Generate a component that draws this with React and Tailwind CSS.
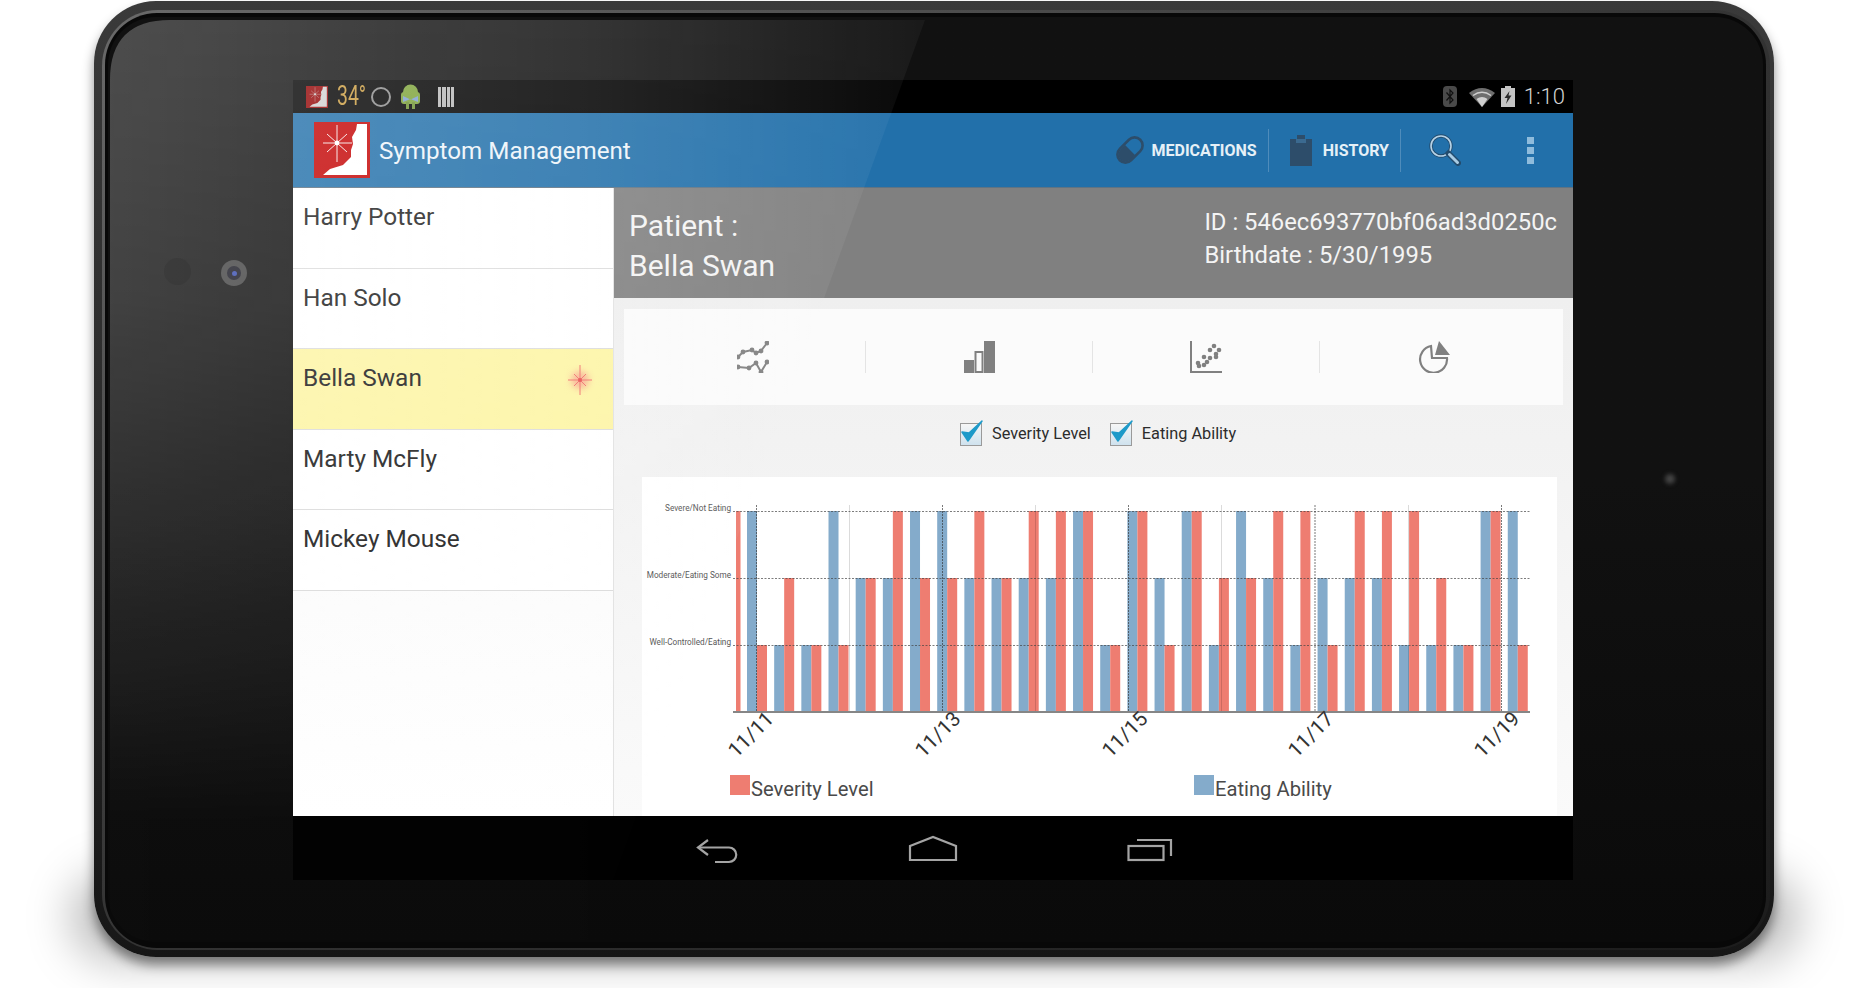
import React from 'react';

const ROBOTO = { fontFamily: 'Roboto, sans-serif' };

const PATIENTS = ['Harry Potter', 'Han Solo', 'Bella Swan', 'Marty McFly', 'Mickey Mouse'];

// [eating, severity] per day group, 1..3 = level
const GROUPS = [
  [3, 1], [1, 2], [1, 1], [3, 1], [2, 2], [2, 3], [3, 2], [3, 2], [2, 3], [2, 2],
  [2, 3], [2, 3], [3, 3], [1, 1], [3, 3], [2, 1], [3, 3], [1, 2], [3, 2], [2, 3],
  [1, 3], [2, 1], [2, 3], [2, 3], [1, 3], [1, 2], [1, 1], [3, 3], [3, 1],
];

const LEVEL_Y = { 1: 645, 2: 578, 3: 511 };
const BASE_Y = 711;

function Logo({ size, bg = '#c40404', fg = '#ffffff' }) {
  return (
    <svg width={size} height={size} viewBox="0 0 56 56" className="shrink-0">
      <rect x="0" y="0" width="56" height="56" fill={bg} />
      <path d="M43 2 L42 8 L38 15 L39 22 L37 28 L37 35 L29 43 L16 47 L9 53 L53 53 L53 2 Z" fill={fg} />
      <g stroke={fg} strokeWidth="0.9">
        <path d="M23 3 V40 M9 21 H38 M13 12 L33 30 M33 12 L13 30" />
      </g>
      <circle cx="23" cy="21" r="2.4" fill={fg} />
    </svg>
  );
}

function StatusBar() {
  return (
    <div className="flex h-[33px] items-center bg-black text-[#b8b8b8]">
      <div className="ml-[13px]"><Logo size={22} bg="#940505" fg="#d2d2d2" /></div>
      <span className="ml-[9px] w-[26px] origin-left scale-x-[.72] text-[27px] leading-none text-[#c99b3f]" style={ROBOTO}>34°</span>
      <div className="ml-[8px] h-[20px] w-[20px] rounded-full border-2 border-[#8c8c8c]" />
      <svg width="21" height="25" viewBox="0 0 21 25" className="ml-[9px]">
        <circle cx="10.500" cy="8" r="7.500" fill="#7da33a" />
        <rect x="1" y="8" width="19" height="12" rx="3" fill="#7da33a" />
        <rect x="6" y="18" width="3" height="7" fill="#6f9433" />
        <rect x="12" y="18" width="3" height="7" fill="#6f9433" />
        <path d="M3 12 L10.500 15.500 L18 12 L18 18 L10.500 15 L3 18 Z" fill="#7d9fd0" />
      </svg>
      <div className="ml-[17px] flex h-[20px] w-[16px] gap-px">
        {[0, 1, 2, 3].map((i) => <div key={i} className="h-full flex-1 bg-[#b9b9b9]" />)}
      </div>
      <div className="flex-1" />
      <svg width="14" height="21" viewBox="0 0 14 21">
        <rect width="14" height="21" rx="4" fill="#4a4a4a" />
        <path d="M3.500 6.500 L10 14 L7 17 V4 L10 7 L3.500 14.500" fill="none" stroke="#111" strokeWidth="1.200" />
      </svg>
      <svg width="26" height="20" viewBox="0 0 26 20" className="ml-[12px]">
        <path d="M0 6 Q13 -4 26 6 L13 20 Z" fill="#6e6e6e" />
        <path d="M7.500 12 Q13 8 18.500 12 L13 20 Z" fill="#d0d0d0" />
        <path d="M4 8.500 Q13 2 22 8.500" fill="none" stroke="#d0d0d0" strokeWidth="1.500" />
      </svg>
      <svg width="14" height="21" viewBox="0 0 14 21" className="ml-[6px]">
        <path d="M4 0 H10 V2 H14 V21 H0 V2 H4 Z" fill="#c4c4c4" />
        <path d="M8.500 5 L3.500 12 H6.500 L5 18 L10.500 9.500 H7.500 Z" fill="#2a2a2a" />
      </svg>
      <span className="ml-[9px] mr-[8px] text-[22px] font-light leading-none text-[#d4d4d4]" style={ROBOTO}>1:10</span>
    </div>
  );
}

function ActionBar() {
  return (
    <div className="flex h-[75px] items-center border-b border-[#5f7383] bg-[#2270aa]">
      <div className="ml-[21px]"><Logo size={56} /></div>
      <span className="ml-[9px] mt-[3px] text-[24.200px] leading-none text-[#eef5fa]" style={ROBOTO}>Symptom Management</span>
      <div className="flex-1" />
      <svg width="30" height="30" viewBox="0 0 30 30">
        <g transform="rotate(-45 15 15)">
          <rect x="0.500" y="7" width="29" height="16" rx="8" fill="none" stroke="#2d4d6a" strokeWidth="2.600" />
          <path d="M8.500 8 A7 7 0 0 0 8.500 22 H15 V8 Z" fill="#2d4d6a" />
        </g>
      </svg>
      <span className="ml-[7px] mt-[2px] text-[16px] font-bold leading-none text-[#e6f0f7]" style={ROBOTO}>MEDICATIONS</span>
      <div className="ml-[11px] h-[43px] w-px bg-[#4f8cbb]" />
      <svg width="22" height="31" viewBox="0 0 22 31" className="ml-[21px]">
        <path d="M0 4 H7 V0 H15 V4 H22 V31 H0 Z" fill="#2d4d6a" />
        <rect x="6" y="4" width="10" height="4" fill="#3b6a90" />
      </svg>
      <span className="ml-[11px] mt-[2px] text-[16px] font-bold leading-none text-[#e6f0f7]" style={ROBOTO}>HISTORY</span>
      <div className="ml-[11px] h-[43px] w-px bg-[#4f8cbb]" />
      <svg width="32" height="32" viewBox="0 0 32 32" className="ml-[28px]">
        <circle cx="12" cy="12" r="10" fill="none" stroke="#234c6e" strokeWidth="3.400" />
        <circle cx="12" cy="12" r="10" fill="none" stroke="#b7d3e7" strokeWidth="1.600" />
        <path d="M19.500 19.500 L29 29" stroke="#234c6e" strokeWidth="6" strokeLinecap="round" />
        <path d="M20.500 20.500 L28.500 28.500" stroke="#a9cce4" strokeWidth="3" strokeLinecap="round" />
      </svg>
      <div className="ml-[66px] mr-[39px] flex flex-col gap-[3px]">
        <div className="h-[7px] w-[7px] bg-[#8fbcdc]" />
        <div className="h-[7px] w-[7px] bg-[#8fbcdc]" />
        <div className="h-[7px] w-[7px] bg-[#8fbcdc]" />
      </div>
    </div>
  );
}

function Star() {
  return (
    <div className="relative h-[30px] w-[24px] shrink-0">
      <div className="absolute left-[3px] top-[6px] h-[18px] w-[18px] rounded-full bg-[#f9a58f] opacity-80 blur-[3px]" />
      <svg width="24" height="30" viewBox="0 0 24 30" className="absolute inset-0">
        <path d="M12 0 V30 M0 15 H24 M6 9 L18 21 M18 9 L6 21" stroke="#f0706a" strokeWidth="1" />
        <circle cx="12" cy="15" r="2" fill="#e8504f" />
      </svg>
    </div>
  );
}

function Sidebar() {
  return (
    <div className="flex w-[321px] shrink-0 flex-col border-r border-[#e2e2e2] bg-gradient-to-b from-[#f6f6f6] to-white">
      {PATIENTS.map((name) => {
        const selected = name === 'Bella Swan';
        return (
          <div
            key={name}
            className={selected
              ? 'flex h-[80.500px] shrink-0 items-start justify-between border-b border-[#dcdcdc] bg-[#fdf5a6] pl-[10px] pr-[21px] pt-[13px]'
              : 'flex h-[80.500px] shrink-0 items-start justify-between border-b border-[#dcdcdc] bg-white pl-[10px] pr-[21px] pt-[13px]'}
          >
            <span className="text-[24.400px] leading-[32px] text-[#222222]" style={ROBOTO}>{name}</span>
            {selected && <div className="mt-[3px]"><Star /></div>}
          </div>
        );
      })}
    </div>
  );
}

function PatientHeader() {
  return (
    <div className="flex h-[110px] shrink-0 justify-between bg-[#808080] text-white" style={ROBOTO}>
      <div className="pl-[15px] pt-[18px] text-[30px] leading-[40px] text-[#f4f4f4]">
        <div>Patient :</div>
        <div>Bella Swan</div>
      </div>
      <div className="pr-[16px] pt-[18px] text-[23.800px] leading-[33px] text-[#f4f4f4]">
        <div>ID : 546ec693770bf06ad3d0250c</div>
        <div>Birthdate : 5/30/1995</div>
      </div>
    </div>
  );
}

function LineIcon() {
  const top = [[1, 16], [6, 11], [15, 9], [19, 12], [24, 10], [30, 2]];
  const bottom = [[1, 26], [12, 27], [19, 22], [24, 31], [30, 21]];
  const points = (list) => list.map((p) => p.join(',')).join(' ');
  return (
    <svg width="32" height="32" viewBox="0 0 32 32" fill="none" stroke="#808080" strokeWidth="2">
      <polyline points={points(top)} />
      <polyline points={points(bottom)} />
      <g fill="#808080" stroke="none">
        {[...top, ...bottom].map(([x, y]) => <circle key={`${x}-${y}`} cx={x} cy={y} r="2.400" />)}
      </g>
    </svg>
  );
}

function BarsIcon() {
  return (
    <svg width="32" height="32" viewBox="0 0 32 32">
      <rect x="1" y="19" width="10" height="13" fill="#808080" />
      <rect x="12.500" y="11" width="7" height="20" fill="none" stroke="#808080" strokeWidth="2" />
      <rect x="21" y="0" width="11" height="32" fill="#808080" />
    </svg>
  );
}

function ScatterIcon() {
  const dots = [[8, 22], [9, 25], [14, 24], [20, 17], [17, 21], [26, 16], [20, 9], [29, 9], [26, 13], [24, 5], [14, 16]];
  return (
    <svg width="32" height="32" viewBox="0 0 32 32">
      <path d="M1 0 V31 H32" fill="none" stroke="#808080" strokeWidth="2" />
      {dots.map(([x, y]) => <circle key={`${x}-${y}`} cx={x} cy={y} r="2.300" fill="#808080" />)}
    </svg>
  );
}

function PieIcon() {
  return (
    <svg width="32" height="32" viewBox="0 0 32 32">
      <path d="M13 5 A13.500 13.500 0 1 0 29 17 L14 17 Z" fill="none" stroke="#808080" strokeWidth="2.200" />
      <path d="M21 0 L32 14 L17 14 Z" fill="#808080" />
    </svg>
  );
}

function ChartTabs() {
  const icons = [<LineIcon key="l" />, <BarsIcon key="b" />, <ScatterIcon key="s" />, <PieIcon key="p" />];
  return (
    <div className="mx-[10px] mt-[11px] flex h-[96px] items-center bg-[#fbfbfb]">
      {icons.map((icon, i) => (
        <div key={i} className={i < 3
          ? 'flex h-[32px] w-[227px] shrink-0 items-center justify-center border-r border-[#e4e4e4] first:w-[242px] first:pl-[16px]'
          : 'flex h-[32px] w-[227px] shrink-0 items-center justify-center'}>
          {icon}
        </div>
      ))}
    </div>
  );
}

function Check({ label, gap }) {
  return (
    <div className={gap}>
      <div className="relative h-[23px] w-[22px] border border-[#9a9a9a] bg-gradient-to-b from-[#f6f6f6] to-[#cfe2ee]">
        <svg width="26" height="26" viewBox="0 0 26 26" className="absolute -right-[3px] -top-[5px]">
          <path d="M4 13 L10 22 L24 2 L11 14 Z" fill="#1e9ac9" stroke="#1e9ac9" strokeWidth="1.500" strokeLinejoin="round" />
        </svg>
      </div>
      <span className="ml-[10px] text-[16.300px] leading-none text-[#2c2c2c]" style={ROBOTO}>{label}</span>
    </div>
  );
}

function BarChart() {
  const bars = [];
  GROUPS.forEach(([eating, severity], i) => {
    const x = 747 + 27.17 * i;
    bars.push(<rect key={`e${i}`} x={x} y={LEVEL_Y[eating]} width="10" height={BASE_Y - LEVEL_Y[eating]} fill="#84abcb" />);
    bars.push(<rect key={`s${i}`} x={x + 10} y={LEVEL_Y[severity]} width="10" height={BASE_Y - LEVEL_Y[severity]} fill="#ee7d71" />);
  });
  const dottedX = [756.5, 942.5, 1128.5, 1315, 1501.5];
  const lightX = [849.5, 1035.5, 1221.5, 1408.5];
  const dates = [['11/11', 775], ['11/13', 962], ['11/15', 1149], ['11/17', 1335], ['11/19', 1521]];
  return (
    <svg width="915" height="290" viewBox="642 477 915 290" className="block" style={ROBOTO}>
      <rect x="736" y="511" width="4.500" height="200" fill="#ee7d71" />
      {bars}
      {lightX.map((x) => <line key={x} x1={x} x2={x} y1="505" y2="711" stroke="#000" strokeOpacity="0.14" />)}
      {dottedX.map((x) => <line key={x} x1={x} x2={x} y1="505" y2="711" stroke="#333" strokeOpacity="0.65" strokeDasharray="2 1" />)}
      {[511.5, 578.5, 645.5].map((y) => <line key={y} x1="733" x2="1531" y1={y} y2={y} stroke="#444" strokeOpacity="0.7" strokeDasharray="2 1.500" />)}
      <rect x="733" y="711" width="797" height="2" fill="#868686" />
      <g fontSize="8.200" fill="#555555" textAnchor="end">
        <text x="731" y="511">Severe/Not Eating</text>
        <text x="731" y="578">Moderate/Eating Some</text>
        <text x="731" y="645">Well-Controlled/Eating</text>
      </g>
      {dates.map(([d, x]) => (
        <text key={d} x={x} y="720" fontSize="20.500" fill="#333333" textAnchor="end" transform={`rotate(-45 ${x} 720)`}>{d}</text>
      ))}
    </svg>
  );
}

function LegendItem({ color, label, className }) {
  return (
    <div className={`flex items-start ${className}`}>
      <div className={color} />
      <span className="mt-[4px] ml-px text-[20.200px] leading-none text-[#4a4a4a]" style={ROBOTO}>{label}</span>
    </div>
  );
}

function Detail() {
  return (
    <div className="flex min-w-0 flex-1 flex-col">
      <PatientHeader />
      <div className="flex flex-1 flex-col bg-gradient-to-b from-[#efefef] to-[#fafafa]">
        <ChartTabs />
        <div className="mt-[18px] flex h-[23px] items-center pl-[346px]">
          <Check label="Severity Level" gap="flex items-center" />
          <Check label="Eating Ability" gap="ml-[19px] flex items-center" />
        </div>
        <div className="ml-[28px] mr-[16px] mt-[31px] flex-1 bg-white">
          <BarChart />
          <div className="flex pl-[88px] pt-[8px]">
            <LegendItem color="h-[20px] w-[20px] bg-[#ee7d71]" label="Severity Level" className="w-[464px]" />
            <LegendItem color="h-[20px] w-[20px] bg-[#84abcb]" label="Eating Ability" className="" />
          </div>
        </div>
      </div>
    </div>
  );
}

function NavBar() {
  return (
    <div className="flex h-[64px] items-start bg-black pt-[22px]">
      <svg width="44" height="26" viewBox="0 0 44 26" fill="none" stroke="#a4a4a4" strokeWidth="2.200" className="ml-[402px]">
        <path d="M13 2 L3 9.500 L13 17" />
        <path d="M3 9.500 H34 A7 7 0 0 1 34 24 H20" />
      </svg>
      <svg width="50" height="27" viewBox="0 0 50 27" fill="none" stroke="#a4a4a4" strokeWidth="2.200" className="ml-[169px] -mt-[3px]">
        <path d="M2 11 L25 2 L48 11 V25 H2 Z" />
      </svg>
      <svg width="46" height="25" viewBox="0 0 46 25" fill="none" stroke="#a4a4a4" strokeWidth="2.200" className="ml-[169px] -mt-px">
        <rect x="1.500" y="9" width="35" height="14" />
        <path d="M10 3 H44 V19" />
      </svg>
    </div>
  );
}

function Reflection() {
  return (
    <svg width="1868" height="988" viewBox="0 0 1868 988" className="pointer-events-none absolute inset-0">
      <defs>
        <linearGradient id="glare" gradientUnits="userSpaceOnUse" x1="100" y1="0" x2="920" y2="0">
          <stop offset="0" stopColor="#fff" stopOpacity="0.26" />
          <stop offset="0.6" stopColor="#fff" stopOpacity="0.15" />
          <stop offset="1" stopColor="#fff" stopOpacity="0.04" />
        </linearGradient>
        <linearGradient id="glareFade" gradientUnits="userSpaceOnUse" x1="0" y1="20" x2="0" y2="820">
          <stop offset="0" stopColor="#fff" />
          <stop offset="0.35" stopColor="#fff" stopOpacity="0.8" />
          <stop offset="1" stopColor="#fff" stopOpacity="0.04" />
        </linearGradient>
        <mask id="glareMask" maskUnits="userSpaceOnUse" x="0" y="0" width="1868" height="988">
          <rect width="1868" height="988" fill="url(#glareFade)" />
        </mask>
      </defs>
      <path d="M170 20 H925 L591 940 H110 V80 Q110 20 170 20 Z" fill="url(#glare)" mask="url(#glareMask)" />
    </svg>
  );
}

export default function App() {
  return (
    <div className="relative h-[988px] w-[1868px] overflow-hidden bg-white">
      {/* drop shadow under the tablet */}
      <div className="absolute bottom-[26px] left-[70px] h-[90px] w-[1730px] rounded-[60px] bg-black/25 blur-[22px]" />

      <div className="relative ml-[94px] mt-px h-[956px] w-[1680px] rounded-[62px] bg-gradient-to-b from-[#3a3a3a] via-[#2a2a2a] to-[#161616] pb-[7px] pl-[8px] pr-[4px] pt-[9px] shadow-[0_8px_12px_rgba(0,0,0,0.45)]">
        <div className="h-full rounded-[56px] bg-gradient-to-br from-[#6a6a6a] via-[#333333] to-[#1c1c1c] pb-[2px] pl-[3px] pr-[4px] pt-[3px]">
          <div className="h-full rounded-[52px] bg-[#080808] pb-[6px] pl-[3px] pr-[3px] pt-[4px]">
            <div className="h-full rounded-[48px] bg-gradient-to-b from-[#111111] via-[#111111] to-[#0a0a0a] pl-[185px] pt-[63px]">
              <div className="flex h-[800px] w-[1280px] flex-col">
                <StatusBar />
                <ActionBar />
                <div className="flex min-h-0 flex-1 bg-white">
                  <Sidebar />
                  <Detail />
                </div>
                <NavBar />
              </div>
            </div>
          </div>
        </div>
      </div>

      {/* front sensors */}
      <div className="absolute left-[164px] top-[258px] h-[27px] w-[27px] rounded-full bg-[#0b0b0b]" />
      <div className="absolute left-[221px] top-[260px] flex h-[26px] w-[26px] items-center justify-center rounded-full bg-[#444444]">
        <div className="flex h-[14px] w-[14px] items-center justify-center rounded-full bg-[#1a1a25]">
          <div className="h-[5px] w-[5px] rounded-full bg-[#3a4fb0]" />
        </div>
      </div>
      <div className="absolute left-[1665px] top-[474px] h-[10px] w-[10px] rounded-full bg-[#444444] blur-[2px]" />

      <Reflection />
    </div>
  );
}
